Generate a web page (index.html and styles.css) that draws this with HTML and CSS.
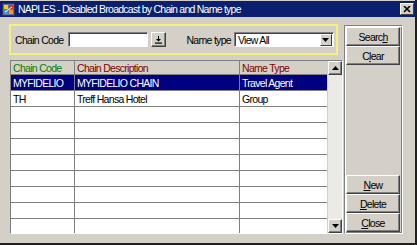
FILE: index.html
```html
<!DOCTYPE html>
<html>
    <head>
        <title>NAPLES - Disabled Broadcast by Chain and Name type</title>
        <link rel="stylesheet" href="styles.css">
    </head>
    <body>
        <div class="window">
            <div class="titlebar">
                <svg class="app-icon" width="13" height="13" viewBox="0 0 13 13">
                    <rect x="0.5" y="0.5" width="12" height="12" fill="#6c6c9c" stroke="#303060"/>
                    <rect x="2" y="2" width="4" height="4" fill="#f0d020"/>
                    <rect x="7" y="2" width="4" height="4" fill="#d03030"/>
                    <rect x="2" y="7" width="4" height="4" fill="#30a0d0"/>
                    <rect x="7" y="7" width="4" height="4" fill="#f0a020"/>
                    <path d="M3 9 L10 4" stroke="#ffffff" stroke-width="1"/>
                </svg>
                <span class="title">NAPLES - Disabled Broadcast by Chain and Name type</span>
                <div class="close-box">
                    <svg width="8" height="7" viewBox="0 0 8 7">
                        <path d="M1 0 L7 6 M7 0 L1 6" stroke="#000" stroke-width="1.6"/>
                    </svg>
                </div>
            </div>
            <div class="main">
                <div class="left">
                    <div class="filter">
                        <span class="label">Chain Code</span>
                        <div class="input"></div>
                        <div class="lookup">
                            <svg width="7" height="8" viewBox="0 0 7 8">
                                <path d="M3 0 H4 V3 H6 L3.5 5.5 L1 3 H3 Z" fill="#000"/>
                                <rect x="0" y="6.5" width="7" height="1.2" fill="#000"/>
                            </svg>
                        </div>
                        <span class="label name-label">Name type</span>
                        <div class="select">
                            <span class="select-value">View All</span>
                            <div class="select-btn">
                                <svg width="7" height="4" viewBox="0 0 7 4">
                                    <path d="M0 0 H7 L3.5 4 Z" fill="#000"/>
                                </svg>
                            </div>
                        </div>
                    </div>
                    <div class="list">
                        <table class="grid">
                            <tr class="head">
                                <th class="c1 green">Chain Code</th>
                                <th class="c2">Chain Description</th>
                                <th class="c3">Name Type</th>
                            </tr>
                            <tr class="selected">
                                <td>MYFIDELIO</td>
                                <td>MYFIDELIO CHAIN</td>
                                <td>Travel Agent</td>
                            </tr>
                            <tr>
                                <td>TH</td>
                                <td>Treff Hansa Hotel</td>
                                <td>Group</td>
                            </tr>
                            <tr><td></td><td></td><td></td></tr>
                            <tr><td></td><td></td><td></td></tr>
                            <tr><td></td><td></td><td></td></tr>
                            <tr><td></td><td></td><td></td></tr>
                            <tr><td></td><td></td><td></td></tr>
                            <tr><td></td><td></td><td></td></tr>
                            <tr><td></td><td></td><td></td></tr>
                            <tr class="last"><td></td><td></td><td></td></tr>
                        </table>
                        <div class="scrollbar">
                            <div class="sb-btn">
                                <svg width="7" height="4" viewBox="0 0 7 4"><path d="M0 4 H7 L3.5 0 Z" fill="#000"/></svg>
                            </div>
                            <div class="sb-track"></div>
                            <div class="sb-btn">
                                <svg width="7" height="4" viewBox="0 0 7 4"><path d="M0 0 H7 L3.5 4 Z" fill="#000"/></svg>
                            </div>
                        </div>
                    </div>
                </div>
                <div class="side">
                    <div class="btn">Searc<u>h</u></div>
                    <div class="btn">C<u>l</u>ear</div>
                    <div class="spacer"></div>
                    <div class="btn"><u>N</u>ew</div>
                    <div class="btn"><u>D</u>elete</div>
                    <div class="btn"><u>C</u>lose</div>
                </div>
            </div>
        </div>
    </body>
</html>
```

FILE: styles.css
```css
body{
    margin: 0;
    padding: 0;
    background: #d4d0c8;
    font-family: "Liberation Sans", Arial, sans-serif;
    font-size: 10.5px;
    letter-spacing: -0.7px;
    color: #000;
}
.window{
    width: 417px;
    height: 245px;
    box-sizing: border-box;
    background: #d4d0c8;
    border-right: 2px solid #202020;
    border-bottom: 2px solid #202020;
    overflow: hidden;
}
.titlebar{
    display: flex;
    align-items: center;
    height: 16px;
    margin-top: 1px;
    padding-left: 2px;
    background: #0a1f6e;
    color: #fff;
}
.app-icon{
    margin-right: 3px;
}
.title{
    flex: 1;
    white-space: nowrap;
    letter-spacing: -0.75px;
}
.close-box{
    display: flex;
    align-items: center;
    justify-content: center;
    width: 12px;
    height: 10px;
    margin-right: 1px;
    background: #d4d0c8;
    border: 1px solid;
    border-color: #fff #404040 #404040 #fff;
}
.main{
    display: flex;
    padding: 7px 0 0 9px;
}
.left{
    display: flex;
    flex-direction: column;
    width: 335px;
}
.filter{
    display: flex;
    align-items: center;
    width: 329px;
    height: 31px;
    box-sizing: border-box;
    border: 2px solid #f2f27c;
    padding-left: 4px;
}
.label{
    flex-shrink: 0;
    white-space: nowrap;
    margin-right: 5px;
}
.input{
    flex-shrink: 0;
    width: 80px;
    height: 15px;
    box-sizing: border-box;
    background: #fff;
    border: 1px solid;
    border-color: #808080 #fff #fff #808080;
    box-shadow: inset 1px 1px #404040;
}
.lookup{
    display: flex;
    flex-shrink: 0;
    align-items: center;
    justify-content: center;
    width: 15px;
    height: 15px;
    margin-left: 3px;
    box-sizing: border-box;
    border: 1px solid;
    border-color: #fff #404040 #404040 #fff;
    box-shadow: inset -1px -1px #808080;
}
.name-label{
    margin-left: 20px;
    margin-right: 3px;
}
.select{
    display: flex;
    flex-shrink: 0;
    align-items: center;
    width: 100px;
    height: 15px;
    box-sizing: border-box;
    background: #fff;
    border: 1px solid;
    border-color: #808080 #fff #fff #808080;
    box-shadow: inset 1px 1px #404040;
    padding: 1px 1px 1px 3px;
}
.select-value{
    flex: 1;
}
.select-btn{
    display: flex;
    align-items: center;
    justify-content: center;
    width: 12px;
    height: 12px;
    box-sizing: border-box;
    background: #d4d0c8;
    border: 1px solid;
    border-color: #fff #404040 #404040 #fff;
}
.list{
    display: flex;
    width: 333px;
    height: 174px;
    margin-top: 5px;
    margin-left: 1px;
    box-sizing: border-box;
    border: 1px solid;
    border-color: #808080 #fff #fff #808080;
    background: #fff;
}
.grid{
    width: 317px;
    border-collapse: collapse;
    table-layout: fixed;
}
.grid th, .grid td{
    height: 15px;
    padding: 0 0 0 2px;
    border-right: 1px solid #808080;
    border-bottom: 1px solid #808080;
    text-align: left;
    font-weight: normal;
    white-space: nowrap;
    overflow: hidden;
    vertical-align: middle;
}
.grid .head th{
    height: 13px;
    background: #d4d0c8;
    color: #800000;
}
.grid .head .green{
    color: #008000;
}
.grid .c1{
    width: 61px;
}
.grid .c2{
    width: 162px;
}
.grid .c3{
    border-right: none;
}
.grid td:last-child{
    border-right: none;
}
.grid .selected td{
    background: #000080;
    color: #fff;
}
.grid .last td{
    height: 14px;
    border-bottom: none;
}
.scrollbar{
    display: flex;
    flex-direction: column;
    width: 14px;
    border-left: 1px solid #d4d0c8;
}
.sb-btn{
    display: flex;
    align-items: center;
    justify-content: center;
    height: 14px;
    box-sizing: border-box;
    background: #d4d0c8;
    border: 1px solid;
    border-color: #fff #404040 #404040 #fff;
    box-shadow: inset -1px -1px #808080;
}
.sb-track{
    flex: 1;
    background: #eceae6;
}
.side{
    display: flex;
    flex-direction: column;
    width: 59px;
    height: 209px;
    margin-top: 1px;
    box-sizing: border-box;
    border: 1px solid;
    border-color: #808080 #fff #fff #808080;
    box-shadow: inset 1px 1px #fff, inset -1px -1px #808080;
    padding: 1px 2px 1px 1px;
}
.spacer{
    flex: 1;
}
.btn{
    display: flex;
    align-items: center;
    justify-content: center;
    height: 19px;
    box-sizing: border-box;
    border: 1px solid;
    border-color: #fff #404040 #404040 #fff;
    box-shadow: inset -1px -1px #808080;
    background: #d4d0c8;
}
```
